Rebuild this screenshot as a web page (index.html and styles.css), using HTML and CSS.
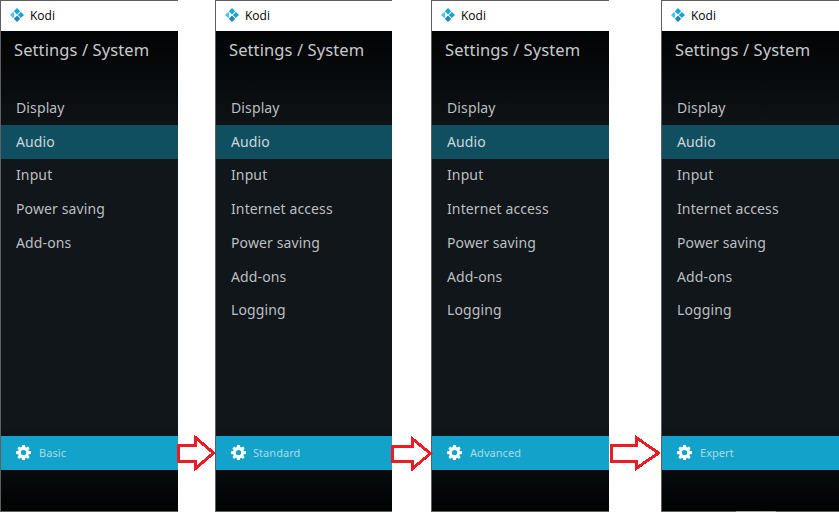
FILE: index.html
```html
<!DOCTYPE html>
<html lang="en">
<head>
<meta charset="utf-8">
<title>Kodi settings levels</title>
<link rel="stylesheet" href="styles.css">
</head>
<body>
<svg class="defs" width="0" height="0" aria-hidden="true">
  <defs>
    <symbol id="kodi" viewBox="0 0 14 14">
      <path fill="#17a9dd" d="M7 0 10.200 3.200 7 6.400 3.800 3.200Z"/>
      <path fill="#1f9fd0" d="M10.900 3.900 14 7 10.900 10.100 7.800 7Z"/>
      <path fill="#2387b5" d="M7 7.600 10.200 10.800 7 14 3.800 10.800Z"/>
      <path fill="#4fc0e6" d="M3.100 3.900 4.100 4.900V9.100L3.100 10.100 0 7Z"/>
    </symbol>
    <symbol id="gear" viewBox="0 0 16 16">
      <path fill="#fff" fill-rule="evenodd" d="M6.500 0h3l.4 2.200 1.200.5L13 1.500 14.500 3.700 13.200 5.200l.5 1.200L16 6.700v2.900l-2.300.3-.5 1.200 1.300 1.700L12.700 14.800 11 13.500l-1.200.5L9.500 16h-3l-.3-2-1.200-.5-1.700 1.300L1.500 12.900 2.800 11.100l-.5-1.200L0 9.600V6.700l2.300-.3.500-1.200L1.500 3.700 3.300 1.500 5 2.700l1.200-.5ZM8 5.200a2.900 2.900 0 1 0 0 5.800 2.900 2.900 0 0 0 0-5.800Z"/>
    </symbol>
    <symbol id="arrow" viewBox="0 0 39 38">
      <path fill="#fff" stroke="#ed1c24" stroke-width="3" d="M1.500 11.500H18.500V3.500L36.500 19 18.500 34.500V27.500H1.500Z"/>
    </symbol>
    <symbol id="arrow-mid" viewBox="0 0 42 38">
      <path fill="#fff" stroke="#ed1c24" stroke-width="3" d="M1.500 12H21V4.500L39.500 19.500 21 35V27.500H1.500Z"/>
    </symbol>
    <symbol id="arrow-long" viewBox="0 0 52 38">
      <path fill="#fff" stroke="#ed1c24" stroke-width="3" d="M2.500 11.500H27V3.500L49.500 19 27 34.500V27.500H2.500Z"/>
    </symbol>
  </defs>
</svg>
<main class="stage">
  <section class="panel">
    <header class="titlebar"><svg class="logo"><use href="#kodi"/></svg><span>Kodi</span></header>
    <div class="screen">
      <h1 class="heading">Settings / System</h1>
      <ul class="menu">
        <li>Display</li><li class="active">Audio</li><li>Input</li><li>Power saving</li><li>Add-ons</li>
      </ul>
      <div class="level"><svg class="gear"><use href="#gear"/></svg><span>Basic</span></div>
    </div>
  </section>
  <div class="gap gap-a"><svg class="arrow"><use href="#arrow"/></svg></div>
  <section class="panel panel-narrow">
    <header class="titlebar"><svg class="logo"><use href="#kodi"/></svg><span>Kodi</span></header>
    <div class="screen">
      <h1 class="heading">Settings / System</h1>
      <ul class="menu">
        <li>Display</li><li class="active">Audio</li><li>Input</li><li>Internet access</li><li>Power saving</li><li>Add-ons</li><li>Logging</li>
      </ul>
      <div class="level"><svg class="gear"><use href="#gear"/></svg><span>Standard</span></div>
    </div>
  </section>
  <div class="gap gap-b"><svg class="arrow arrow-mid"><use href="#arrow-mid"/></svg></div>
  <section class="panel">
    <header class="titlebar"><svg class="logo"><use href="#kodi"/></svg><span>Kodi</span></header>
    <div class="screen">
      <h1 class="heading">Settings / System</h1>
      <ul class="menu">
        <li>Display</li><li class="active">Audio</li><li>Input</li><li>Internet access</li><li>Power saving</li><li>Add-ons</li><li>Logging</li>
      </ul>
      <div class="level"><svg class="gear"><use href="#gear"/></svg><span>Advanced</span></div>
    </div>
  </section>
  <div class="gap gap-c"><svg class="arrow arrow-long"><use href="#arrow-long"/></svg></div>
  <section class="panel panel-last">
    <header class="titlebar"><svg class="logo"><use href="#kodi"/></svg><span>Kodi</span></header>
    <div class="screen">
      <h1 class="heading">Settings / System</h1>
      <ul class="menu">
        <li>Display</li><li class="active">Audio</li><li>Input</li><li>Internet access</li><li>Power saving</li><li>Add-ons</li><li>Logging</li>
      </ul>
      <div class="level"><svg class="gear"><use href="#gear"/></svg><span>Expert</span></div>
    </div>
  </section>
</main>
</body>
</html>
```
FILE: styles.css
```css
* { box-sizing: border-box; }
html, body { margin: 0; padding: 0; background: #fff; }
body { width: 839px; height: 513px; overflow: hidden; font-family: "Noto Sans", "Open Sans", sans-serif; }
.defs { display: block; height: 0; }
.stage { display: flex; align-items: stretch; height: 512px; }
.panel { flex: 0 0 178px; display: flex; flex-direction: column; border: 1px solid #5f5f5f; border-right: 0; }
.panel-narrow { flex-basis: 177px; }
.panel-last { position: relative; }
.panel-last::after { content: ""; position: absolute; left: 74px; bottom: -1px; width: 40px; height: 1px; background: #a0a0a0; }
.titlebar { flex: 0 0 30px; display: flex; align-items: center; gap: 6px; padding: 0 0 2px 9px; background: #fff; color: #000; font: 12px "Open Sans", sans-serif; }
.logo { width: 14px; height: 14px; }
.screen { flex: 1; display: flex; flex-direction: column; background: linear-gradient(180deg, #020304 0%, #10161a 24%, #10161a 82%, #010202 100%); }
.heading { margin: 0; padding: 6px 0 0 13px; height: 60px; font-size: 16.5px; line-height: 26px; font-weight: 400; letter-spacing: 0.1px; color: #c8cacb; }
.menu { list-style: none; margin: 0; padding: 0; flex: 1; }
.menu li { height: 33.72px; line-height: 33px; padding-left: 15px; font-size: 14px; letter-spacing: 0.12px; color: #bcbfc1; }
.menu .active { background: #104f60; box-shadow: 0 1px 0 #104f60; color: #cdd6da; }
.level { flex: 0 0 34px; margin-bottom: 41px; display: flex; align-items: center; gap: 8px; padding: 0 0 1px 15px; background: #13a2c9; color: #a9dbe9; font-size: 11px; letter-spacing: 0.05px; }
.panel-narrow .level { gap: 7px; }
.gear { width: 15px; height: 15px; }
.gap { flex: 0 0 37px; min-width: 0; display: flex; align-items: flex-start; padding-top: 434px; }
.gap-a .arrow, .gap-b .arrow { margin-left: -1px; }
.gap-b { flex-basis: 39px; }
.gap-c { flex-basis: 52px; }
.arrow { width: 39px; height: 38px; flex: none; position: relative; z-index: 1; shape-rendering: crispEdges; }
.arrow-mid { width: 42px; }
.arrow-long { width: 52px; }
```
